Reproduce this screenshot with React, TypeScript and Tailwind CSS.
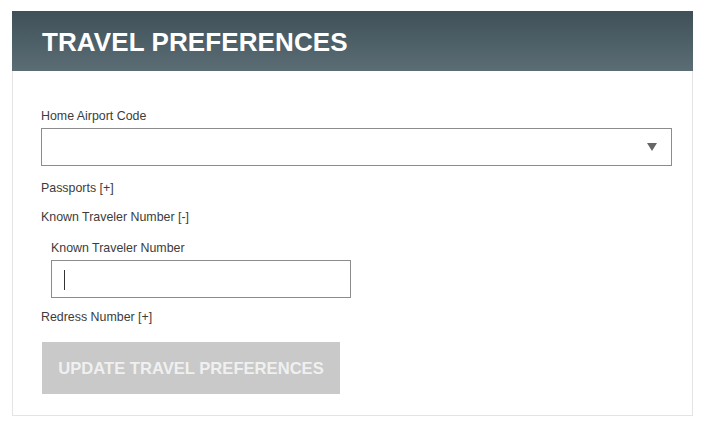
export default function App() {
  return (
    <div className="min-h-screen bg-white pt-[11px] pl-3 pr-3 font-['Liberation_Sans',Arial,sans-serif]">
      <div className="w-[681px] border border-[#e4e4e4] border-t-0">
        <div className="h-[60px] -mx-px bg-gradient-to-b from-[#3f5058] to-[#5b6d75] pl-[30px] flex items-center">
          <h1 className="text-[26px] font-bold text-white leading-none pt-px tracking-[0.1px]">TRAVEL PREFERENCES</h1>
        </div>
        <div className="pt-[37px] pl-7 pr-5 pb-[21px] text-[12.4px] leading-4 text-[#3c3c3c]">
          <label className="block">Home Airport Code</label>
          <div className="relative mt-[4px] h-[38px] w-[631px] border border-[#8c8c8c] bg-white">
            <svg className="absolute right-[14px] top-[14px]" width="10" height="8" viewBox="0 0 10 8">
              <polygon points="0,0 10,0 5,8" fill="#666" />
            </svg>
          </div>
          <div className="mt-[14px]">Passports [+]</div>
          <div className="mt-[13px]">Known Traveler Number [-]</div>
          <div className="pl-[10px] mt-[15px]">
            <label className="block">Known Traveler Number</label>
            <div className="relative mt-[4px] h-[38px] w-[300px] border border-[#8c8c8c] bg-white">
              <span className="absolute left-3 top-[9px] h-[20px] w-px bg-[#333]" />
            </div>
          </div>
          <div className="mt-[11px]">Redress Number [+]</div>
          <button
            type="button"
            className="mt-[17px] ml-px h-[52px] w-[298px] bg-[#c8c9c8] pt-[2px] text-[16.6px] font-bold text-[#f0f0f0]"
          >
            UPDATE TRAVEL PREFERENCES
          </button>
        </div>
      </div>
    </div>
  );
}
